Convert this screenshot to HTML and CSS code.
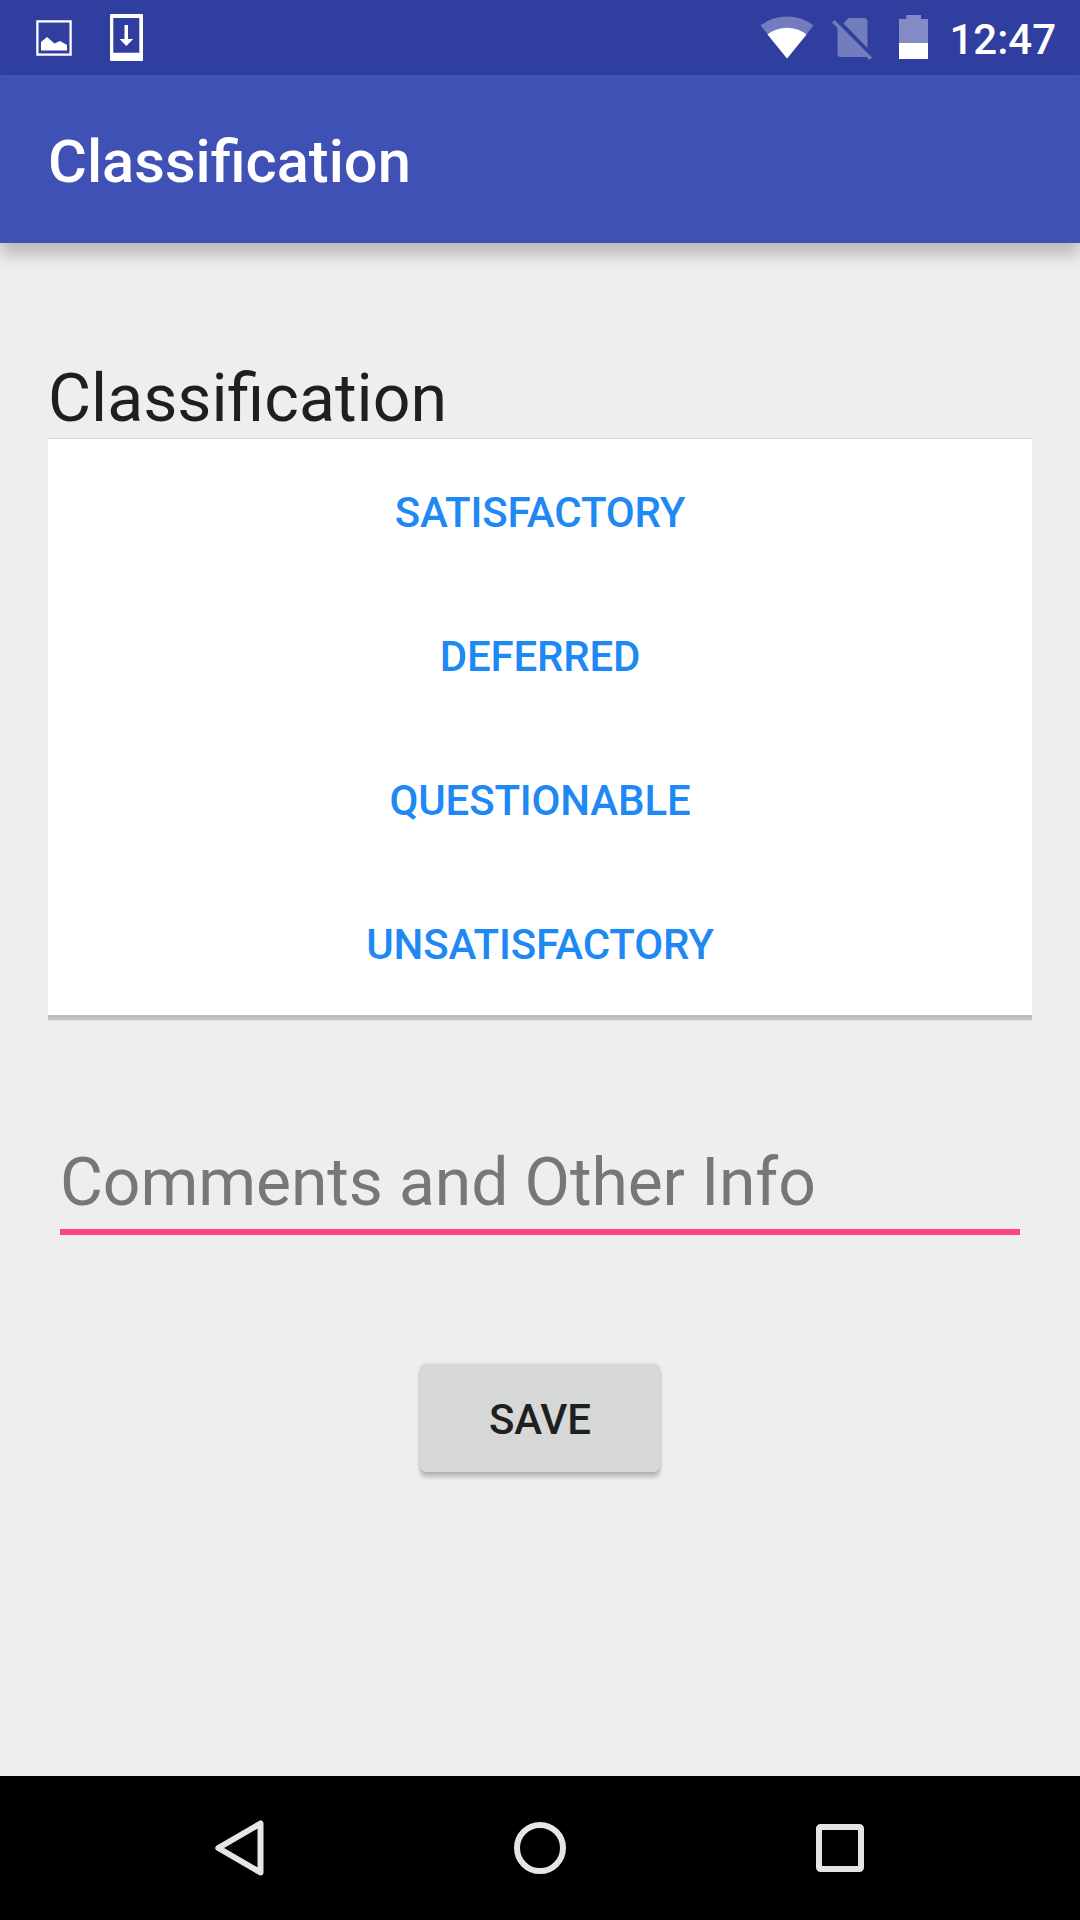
FILE: index.html
```html
<!DOCTYPE html>
<html lang="en">
<head>
<meta charset="utf-8">
<title>Classification</title>
<link rel="stylesheet" href="styles.css">
</head>
<body>
<div class="screen">
  <header class="status-bar">
    <div class="notifications">
      <svg width="36" height="36" viewBox="0 0 36 36"><rect x="1.4" y="1.4" width="33.2" height="33.2" fill="none" stroke="#fff" stroke-width="2.3"/><path d="M5 22 11 17 18.5 23.5 24 21 31 25V30.5H5Z" fill="#fff"/></svg>
      <svg width="33" height="48" viewBox="0 0 33 48"><path fill="#fff" fill-rule="evenodd" d="M1 0H32Q33 0 33 1V46Q33 47 32 47H1Q0 47 0 46V1Q0 0 1 0ZM3.3 4V38.7H29.3V4Z"/><path d="M14.5 11H18V25H23.2L16.3 32 9.5 25H14.5Z" fill="#fff"/></svg>
    </div>
    <div class="system">
      <svg class="wifi" width="54" height="43" viewBox="0 0 54 43"><path d="M.5 9.5Q12 .5 27 .5T53.5 9.5L27 42.5Z" fill="#fff" opacity=".32"/><path d="M7.5 18.5Q16 11.7 27 11.7T46.5 18.5L27 42.5Z" fill="#fff"/></svg>
      <svg class="sim" width="40" height="42" viewBox="0 0 40 42"><g fill="#fff" opacity=".32"><path d="M11.5 5.5 16.5 0H32Q35.5 0 35.5 3.5V30Z"/><path d="M2.5 2 40 39.5 37.5 42 34.5 39H9Q5.5 39 5.5 35.5V10L0 4.5Z"/></g></svg>
      <svg class="battery" width="29" height="44" viewBox="0 0 29 44"><path d="M7.3 0H22V4H29V28H0V4H7.3Z" fill="#fff" opacity=".4"/><path d="M0 28H29V44H0Z" fill="#fff"/></svg>
      <span class="clock">12:47</span>
    </div>
  </header>
  <div class="toolbar"><h1>Classification</h1></div>
  <main class="content">
    <h2 class="label">Classification</h2>
    <div class="choices">
      <button class="choice">SATISFACTORY</button>
      <button class="choice">DEFERRED</button>
      <button class="choice">QUESTIONABLE</button>
      <button class="choice">UNSATISFACTORY</button>
    </div>
    <div class="comments">Comments and Other Info</div>
    <button class="save">SAVE</button>
  </main>
  <nav class="nav-bar">
    <svg width="60" height="60" viewBox="0 0 60 60"><path d="M50.5 5.5V54.5L8.3 30Z"/></svg>
    <svg width="60" height="60" viewBox="0 0 60 60"><circle cx="30" cy="30" r="23"/></svg>
    <svg width="60" height="60" viewBox="0 0 60 60"><rect x="9" y="9" width="42" height="42" rx="1.5"/></svg>
  </nav>
</div>
</body>
</html>
```
FILE: styles.css
```css
* { box-sizing: border-box; }

body {
  margin: 0;
  font-family: Roboto, sans-serif;
  background: #eee;
}

.screen {
  display: flex;
  flex-direction: column;
  width: 1080px;
  height: 1920px;
  overflow: hidden;
  background: #eee;
  color: #1f1f1f;
}

h1, h2 { margin: 0; }

button {
  border: 0;
  margin: 0;
  font: 500 42px/48px Roboto, sans-serif;
}

svg { display: block; flex: none; }

.status-bar {
  display: flex;
  justify-content: space-between;
  height: 75px;
  padding: 0 24px 0 36px;
  background: #303f9f;
}

.notifications {
  display: flex;
  align-items: center;
  gap: 37.5px;
}

.system {
  display: flex;
  align-items: flex-start;
}

.wifi { margin: 16px 18px 0 0; }
.sim { margin: 18px 27px 0 0; }
.battery { margin: 15px 21px 0 0; }

.clock {
  padding-top: 15px;
  color: #fff;
  font-size: 42px;
  font-weight: 500;
  line-height: 49px;
}

.toolbar {
  display: flex;
  align-items: center;
  height: 168px;
  padding: 5px 48px 0;
  background: #3f51b5;
  box-shadow: 0 12px 14px rgba(0, 0, 0, .21);
}

.toolbar h1 {
  color: #fff;
  font-size: 59.6px;
  font-weight: 500;
  line-height: 70px;
}

.content {
  display: flex;
  flex-direction: column;
  flex: 1;
  padding: 117px 48px 0;
}

.label {
  font-size: 66.2px;
  font-weight: 400;
  line-height: 77px;
}

.choices {
  display: flex;
  flex-direction: column;
  margin-top: 2px;
  background: #fff;
  box-shadow: 0 -1px 0 rgba(0, 0, 0, .1), 0 3px 0 rgba(0, 0, 0, .04), 0 5px 0 rgba(0, 0, 0, .12), 0 6px 0 rgba(0, 0, 0, .05);
}

.choice {
  height: 144px;
  padding: 3px 0 0;
  background: none;
  color: #1e88f5;
  letter-spacing: -.16px;
}

.comments {
  margin: 129px 12px 0;
  height: 91px;
  border-bottom: 6px solid #ff4081;
  color: #777;
  font-size: 66px;
  line-height: 77px;
  letter-spacing: -.09px;
}

.save {
  align-self: center;
  width: 240px;
  height: 108px;
  margin-top: 129px;
  padding: 3px 0 0;
  border-radius: 6px;
  background: #d6d8d7;
  color: #1f1f1f;
  letter-spacing: -.1px;
  box-shadow: 0 5px 4px rgba(0, 0, 0, .22), 0 0 3px rgba(0, 0, 0, .13);
}

.nav-bar {
  display: flex;
  justify-content: center;
  align-items: center;
  gap: 240px;
  height: 144px;
  background: #000;
}

.nav-bar svg {
  fill: none;
  stroke: #e5e5e5;
  stroke-width: 6;
  stroke-linejoin: round;
}
```
